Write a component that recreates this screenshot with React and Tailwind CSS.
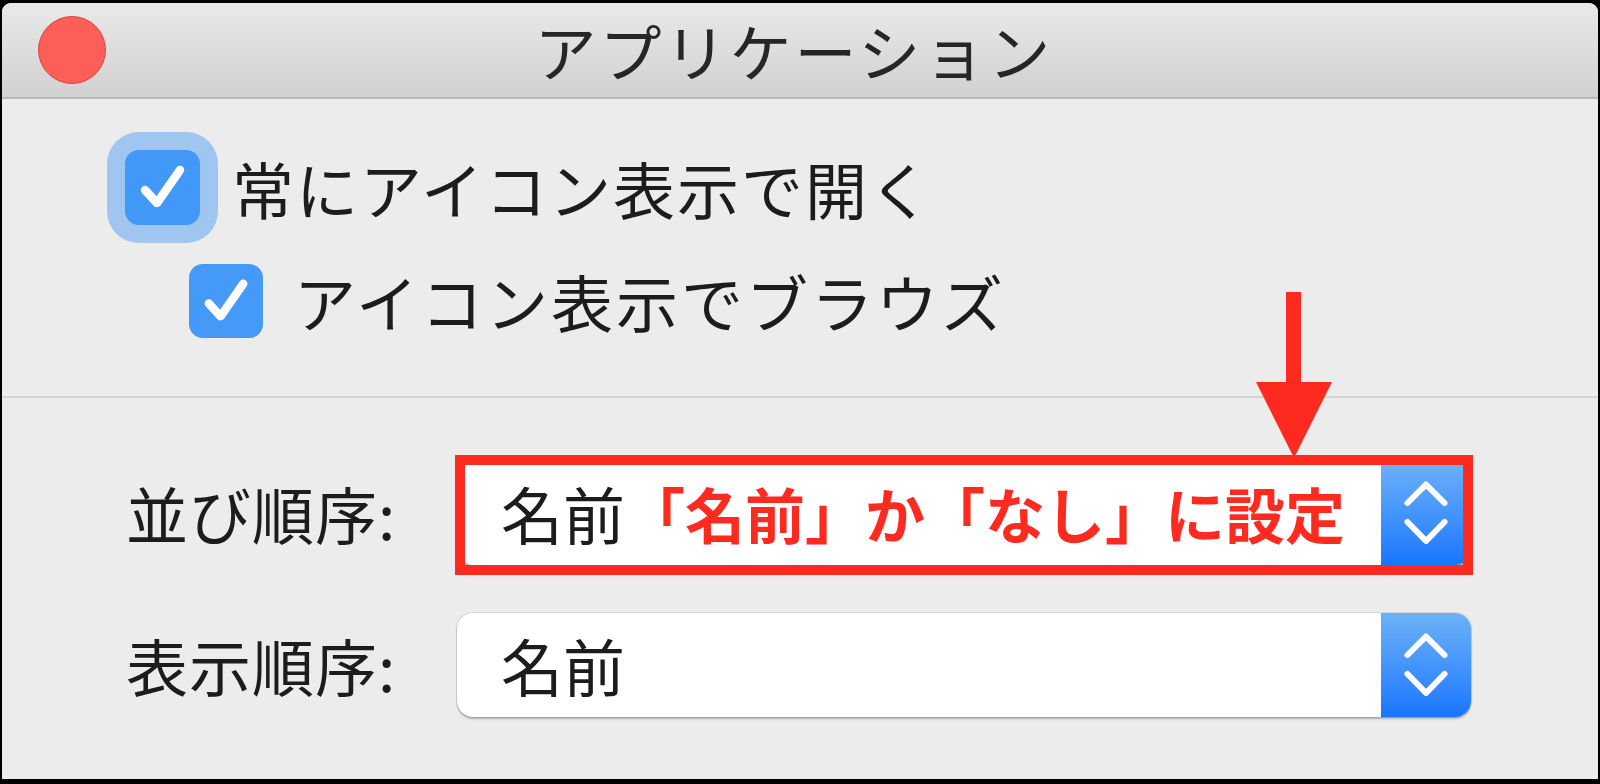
export default function App() {
  const check = (
    <svg viewBox="0 0 75 75" className="h-full w-full">
      <path d="M20 40 L32 53 L55 20" fill="none" stroke="white" strokeWidth="8.5" strokeLinecap="round" strokeLinejoin="round" />
    </svg>
  );
  const stepper = (
    <div className="flex w-[90px] shrink-0 items-center justify-center bg-gradient-to-b from-[#6cb1f7] to-[#1775fe]">
      <svg width="48" height="66" viewBox="0 0 48 66">
        <path d="M5.5 23 L24 4.5 L42.5 23" fill="none" stroke="white" strokeWidth="6" strokeLinecap="round" strokeLinejoin="round" />
        <path d="M5.5 42 L24 61 L42.5 42" fill="none" stroke="white" strokeWidth="6" strokeLinecap="round" strokeLinejoin="round" />
      </svg>
    </div>
  );
  return (
    <div className="h-[784px] w-[1600px] bg-black px-[2px] pb-[5px] pt-[3px] font-['Noto_Sans_CJK_JP',sans-serif] text-[#1c1c1c]">
      <div className="relative flex h-full flex-col overflow-hidden rounded-t-[9px] bg-[#ececec]">
        {/* title bar */}
        <div className="grid h-[96px] shrink-0 grid-cols-[1fr_auto_1fr] items-center border-b-[2px] border-[#b9b9b9] bg-gradient-to-b from-[#e9e9e9] to-[#d1d1d1]">
          <div className="pl-[36px]">
            <div className="h-[68px] w-[68px] rounded-full border border-[#e0443e] bg-[#fc5f57]" />
          </div>
          <div className="pr-[12px] text-[62px] leading-none tracking-[3px] text-[#262626]">アプリケーション</div>
          <div />
        </div>

        {/* checkboxes */}
        <div className="flex flex-col pb-[58px] pt-[51px]">
          <div className="flex items-center pl-[123px]">
            <div className="h-[75px] w-[75px] rounded-[14px] bg-[#4298f6] shadow-[0_0_0_18px_#9fc6f1]">{check}</div>
            <span className="ml-[32px] text-[62px] leading-none tracking-[2px]">常にアイコン表示で開く</span>
          </div>
          <div className="mt-[39px] flex items-center pl-[187px]">
            <div className="h-[74px] w-[74px] rounded-[14px] bg-[#4599f7]">{check}</div>
            <span className="ml-[31px] text-[62px] leading-none tracking-[3px]">アイコン表示でブラウズ</span>
          </div>
        </div>

        <div className="h-[2px] shrink-0 bg-[#d2d2d2]" />

        {/* popups */}
        <div className="flex flex-col pt-[63px]">
          <div className="flex items-center pl-[124px]">
            <div className="w-[331px] text-[62px] leading-none tracking-[1px]">並び順序:</div>
            <div className="relative">
              <div className="flex h-[104px] w-[1014px] overflow-hidden rounded-[16px] bg-white shadow-[0_0_0_1px_rgba(0,0,0,0.1),0_2px_2px_rgba(0,0,0,0.25)]">
                <div className="flex flex-1 items-center whitespace-nowrap pl-[44px]">
                  <span className="text-[62px] leading-none">名前</span>
                  <span className="text-[60px] font-bold leading-none text-[#fd2a1f]">「名前」か「なし」に設定</span>
                </div>
                {stepper}
              </div>
              <div className="pointer-events-none absolute -bottom-[10px] -left-[2px] -right-[2px] -top-[6px] border-[10px] border-[#fd2a1f]" />
            </div>
          </div>
          <div className="mt-[48px] flex items-center pl-[124px]">
            <div className="w-[331px] text-[62px] leading-none tracking-[1px]">表示順序:</div>
            <div className="flex h-[104px] w-[1014px] overflow-hidden rounded-[16px] bg-white shadow-[0_0_0_1px_rgba(0,0,0,0.1),0_2px_2px_rgba(0,0,0,0.25)]">
              <div className="flex flex-1 items-center pl-[44px]">
                <span className="text-[62px] leading-none">名前</span>
              </div>
              {stepper}
            </div>
          </div>
        </div>

        {/* annotation arrow */}
        <svg className="pointer-events-none absolute left-[1254px] top-[289px]" width="76" height="166" viewBox="0 0 76 166">
          <rect x="30" y="0" width="15" height="92" fill="#fd2a1f" />
          <polygon points="0,90 76,90 38,166" fill="#fd2a1f" />
        </svg>
      </div>
    </div>
  );
}
